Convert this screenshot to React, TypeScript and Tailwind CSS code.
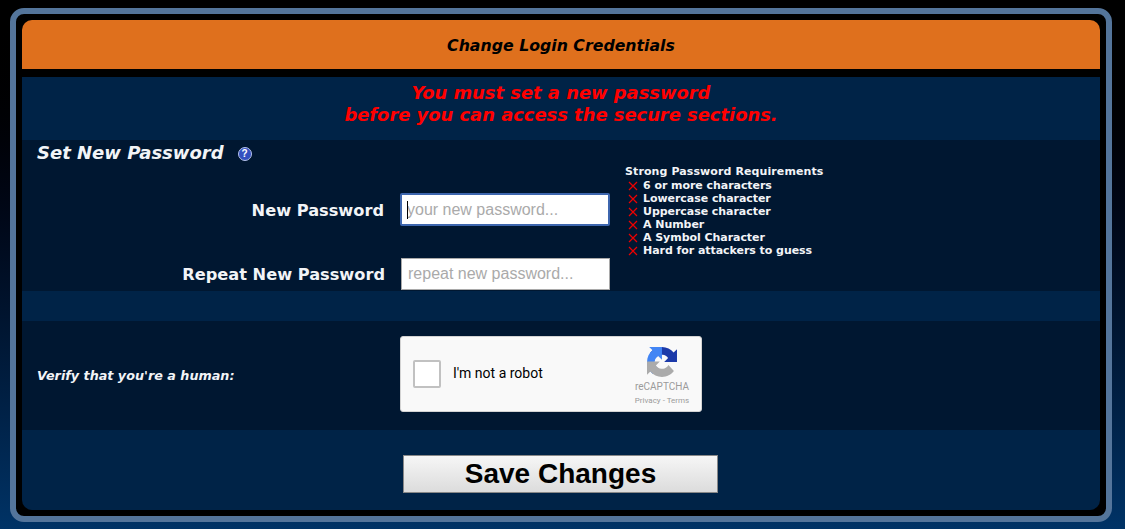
const reqs = [
  "6 or more characters",
  "Lowercase character",
  "Uppercase character",
  "A Number",
  "A Symbol Character",
  "Hard for attackers to guess",
];

const verdana = "font-['DejaVu_Sans',sans-serif]";

function RecaptchaLogo() {
  return (
    <svg viewBox="0 0 64 64" className="h-[30px] w-[30px]">
      <path fill="#1c3aa9" d="M64 31.955l-.033-1.37V4.687l-7.16 7.16C50.948 4.674 42.033.093 32.05.093c-10.4 0-19.622 4.96-25.458 12.64l11.736 11.86a15.55 15.55 0 0 1 4.754-5.334c2.05-1.6 4.952-2.906 8.968-2.906.485 0 .86.057 1.135.163 4.976.393 9.288 3.14 11.828 7.124l-8.307 8.307 32.294.01" />
      <path fill="#4285f4" d="M31.955 0l-1.37.033H4.687l7.16 7.16C4.674 13.052.093 21.967.093 31.95c0 10.4 4.96 19.622 12.64 25.458l11.86-11.736a15.55 15.55 0 0 1-5.334-4.754c-1.6-2.05-2.906-4.952-2.906-8.968 0-.485.057-.86.163-1.135.393-4.976 3.14-9.288 7.124-11.828l8.307 8.307L31.957 0" />
      <path fill="#ababab" d="M.001 31.955l.033 1.37v25.898l7.16-7.16c5.86 7.173 14.774 11.754 24.76 11.754 10.4 0 19.622-4.96 25.458-12.64L45.676 38.32a15.55 15.55 0 0 1-4.754 5.334c-2.05 1.6-4.952 2.906-8.968 2.906-.485 0-.86-.057-1.135-.163-4.976-.393-9.288-3.14-11.828-7.124l8.307-8.307-32.294-.01" />
    </svg>
  );
}

function RedX() {
  return (
    <svg viewBox="0 0 10 10" className="h-[10px] w-[10px] shrink-0">
      <path d="M1 1l8 8M9 1l-8 8" stroke="#ee0000" strokeWidth="1.2" fill="none" />
    </svg>
  );
}

export default function App() {
  return (
    <div className="h-[529px] w-[1125px] overflow-hidden bg-linear-to-b from-[#000000] to-[#003366] pl-[10px] pr-[13px] pt-[8px] pb-[7px]">
      <div className="h-full rounded-[14px] border-[6px] border-[#54759b] bg-black p-[6px]">
        <div className="flex h-full flex-col overflow-hidden rounded-[10px]">
          {/* Header */}
          <div className={`flex h-[49px] items-center justify-center bg-[#df701d] pt-[2px] text-[15.75px] font-bold italic text-black ${verdana}`}>
            Change Login Credentials
          </div>

          {/* Warning */}
          <div className={`mt-[8px] h-[63px] bg-[#002347] pt-[5px] text-center text-[17.9px] leading-[22px] font-bold italic text-[#ff0000] ${verdana}`}>
            <div>You must set a new password</div>
            <div>before you can access the secure sections.</div>
          </div>

          {/* Password form */}
          <div className={`h-[151px] bg-[#001731] ${verdana}`}>
            <div className="flex h-[25px] items-center pl-[15px]">
              <span className="text-[18px] font-bold italic text-[#f2f4f7]">Set New Password</span>
              <span className="relative mt-[2px] ml-[14px] flex h-[14px] w-[14px] items-center justify-center rounded-full border border-[#b4c2ea] bg-[#3450c0] font-['Liberation_Sans',sans-serif] text-[10px] font-bold text-white">
                ?
              </span>
            </div>
            <div className="flex">
              <div className="w-[588px] pt-[28px]">
                <div className="flex items-center">
                  <label className="w-[363px] pt-[4px] text-right text-[16.2px] font-bold text-[#f2f4f7]">New Password</label>
                  <div className="relative ml-[16px]">
                    <input
                      readOnly
                      placeholder="your new password..."
                      className="block h-[33px] w-[210px] rounded-[2px] border-2 border-[#3d66ae] bg-white px-[5px] font-['Liberation_Sans',sans-serif] text-[16px] outline-none placeholder:text-[#aaaaaa]"
                    />
                    <span className="absolute left-[7px] top-[8px] h-[18px] w-px bg-black" />
                  </div>
                </div>
                <div className="mt-[32px] flex items-center">
                  <label className="w-[363px] pt-[2px] text-right text-[16.2px] font-bold text-[#f2f4f7]">Repeat New Password</label>
                  <input
                    readOnly
                    placeholder="repeat new password..."
                    className="ml-[16px] block h-[32px] w-[209px] border border-[#a9a9a9] bg-white px-[6px] font-['Liberation_Sans',sans-serif] text-[16px] outline-none placeholder:text-[#aaaaaa]"
                  />
                </div>
              </div>
              <div className="ml-[15px] text-[11px] leading-[13px] font-bold text-[#f2f4f7]">
                <div className="mb-[1px] tracking-[0.1px]">Strong Password Requirements</div>
                {reqs.map((r) => (
                  <div key={r} className="flex items-center gap-[5px] pl-[3px] tracking-[-0.05px]">
                    <RedX />
                    <span>{r}</span>
                  </div>
                ))}
              </div>
            </div>
          </div>

          <div className="h-[30px] bg-[#002347]" />

          {/* Captcha */}
          <div className="flex h-[109px] items-start bg-[#001731] pt-[15px]">
            <div className={`flex h-[76px] w-[378px] items-center pl-[15px] pt-[3px] text-[12.75px] font-bold italic text-[#f2f4f7] ${verdana}`}>
              Verify that you're a human:
            </div>
            <div className="flex h-[76px] w-[302px] items-start justify-between rounded-[3px] border border-[#d3d3d3] bg-[#f9f9f9] pl-[12px] pr-[12px] font-['Roboto',sans-serif]">
              <div className="flex h-[74px] items-center">
                <div className="h-[28px] w-[28px] rounded-[2px] border-2 border-[#c1c1c1] bg-white" />
                <span className="ml-[12px] pb-[1px] text-[14px] text-black">I'm not a robot</span>
              </div>
              <div className="-mr-[1px] flex w-[56px] flex-col items-center pt-[10px]">
                <RecaptchaLogo />
                <div className="mt-[3px] text-[10px] leading-[14px] text-[#9b9b9b]">reCAPTCHA</div>
                <div className="mt-[2px] text-[8px] leading-[10px] whitespace-nowrap text-[#9b9b9b]">Privacy - Terms</div>
              </div>
            </div>
          </div>

          {/* Save */}
          <div className="flex flex-1 justify-center bg-[#002347] pt-[25px] pr-[1px]">
            <button className="h-[38px] w-[315px] border border-[#888888] bg-linear-to-b from-[#f6f6f6] to-[#dcdcdc] font-['Liberation_Sans',sans-serif] text-[28px] leading-none font-bold text-black">
              Save Changes
            </button>
          </div>
        </div>
      </div>
    </div>
  );
}
